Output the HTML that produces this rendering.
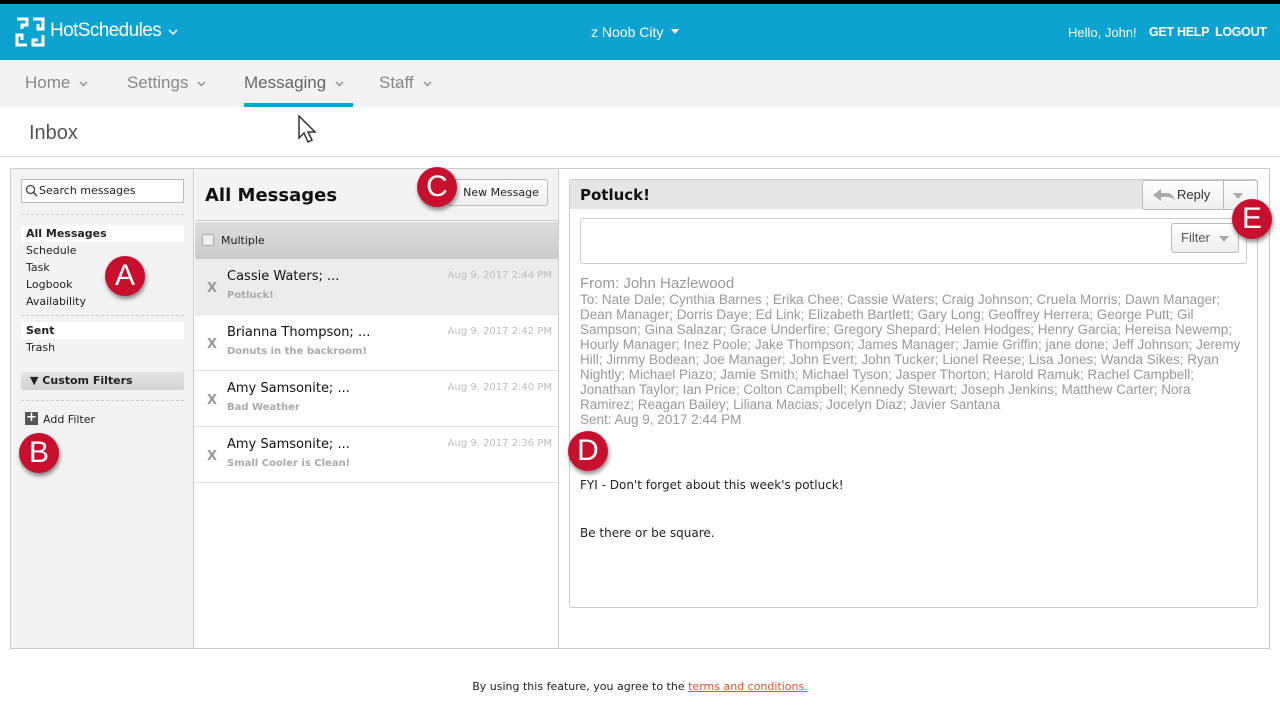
<!DOCTYPE html>
<html><head><meta charset="utf-8"><style>
*{box-sizing:border-box;margin:0;padding:0}
body{width:1280px;height:724px;background:#fff;font-family:"Liberation Sans",sans-serif;position:relative;overflow:hidden;color:#222}
.abs{position:absolute}
.top{left:0;top:0;width:1280px;height:4px;background:#000}
.hdr{left:0;top:4px;width:1280px;height:56px;background:#0ca3d0;color:#fff}
.nav{left:0;top:60px;width:1280px;height:47px;background:#f3f3f3}
.nav span{position:absolute;top:13px;font-size:17px;color:#888;white-space:nowrap}
.chev{display:inline-block;margin-left:9px;vertical-align:middle}
.badge{position:absolute;width:40px;height:40px;border-radius:50%;background:#c8102e;color:#fff;font-size:30px;text-align:center;line-height:40px;box-shadow:1px 3px 4px rgba(0,0,0,.45);font-family:"Liberation Sans",sans-serif}
.v{font-family:"DejaVu Sans",Verdana,sans-serif}
.side a{display:block;font-size:11px;color:#222;height:17px;line-height:17px;padding-left:5px}
.dash{border-top:1px dashed #ccc}
.row{position:absolute;left:195px;width:363px;height:56px;border-bottom:1px solid #e3e3e3;background:#fff}
.row .x{position:absolute;left:12px;top:22px;font-size:13px;color:#999;font-weight:bold}
.row .n{position:absolute;left:32px;top:10px;font-size:13px;color:#111}
.row .d{position:absolute;right:6px;top:11px;font-size:10px;color:#bbb}
.row .s{position:absolute;left:32px;top:31px;font-size:10px;color:#aaa;font-weight:bold}
.body{font-family:"Liberation Sans Narrow","Liberation Sans",sans-serif;color:#999;font-size:13.5px;line-height:15px;white-space:nowrap}
</style></head><body>
<div class="abs top"></div>
<div class="abs hdr">
 <svg class="abs" style="left:14px;top:12px" width="32" height="32" viewBox="0 0 32 32" fill="none" stroke="#fff" stroke-width="3"><path d="M3 3h10v6H8v4M19 3h10v10h-5V8M29 19v10H19v-5h5M13 29H3V19h5v5"/></svg>
 <div class="abs" style="left:50px;top:16px;font-size:19px;letter-spacing:-0.6px">HotSchedules</div>
 <svg class="abs" style="left:168px;top:25px" width="10" height="7" viewBox="0 0 10 7"><path d="M1 1l4 4 4-4" fill="none" stroke="#fff" stroke-width="1.5"/></svg>
 <div class="abs" style="left:591px;top:20px;font-size:14px">z Noob City</div>
 <div class="abs" style="left:671px;top:25px;width:0;height:0;border-left:4px solid transparent;border-right:4px solid transparent;border-top:5px solid #fff"></div>
 <div class="abs" style="left:1068px;top:21px;font-size:13px">Hello, John!</div>
 <div class="abs" style="left:1149px;top:21px;font-size:12.5px;font-weight:bold;letter-spacing:-0.3px">GET HELP</div>
 <div class="abs" style="left:1215px;top:21px;font-size:12.5px;font-weight:bold;letter-spacing:-0.3px">LOGOUT</div>
</div>
<div class="abs nav">
 <span style="left:25px">Home<svg class="chev" width="9" height="6" viewBox="0 0 9 6"><path d="M1 1l3.5 3.5L8 1" fill="none" stroke="#888" stroke-width="1.3"/></svg></span>
 <span style="left:127px">Settings<svg class="chev" width="9" height="6" viewBox="0 0 9 6"><path d="M1 1l3.5 3.5L8 1" fill="none" stroke="#888" stroke-width="1.3"/></svg></span>
 <span style="left:244px;color:#666">Messaging<svg class="chev" width="9" height="6" viewBox="0 0 9 6"><path d="M1 1l3.5 3.5L8 1" fill="none" stroke="#888" stroke-width="1.3"/></svg></span>
 <span style="left:379px">Staff<svg class="chev" width="9" height="6" viewBox="0 0 9 6"><path d="M1 1l3.5 3.5L8 1" fill="none" stroke="#888" stroke-width="1.3"/></svg></span>
 <div class="abs" style="left:244px;top:43px;width:109px;height:4px;background:#0ca3d0"></div>
</div>
<svg class="abs" style="left:297px;top:114px" width="22" height="30" viewBox="0 0 22 30"><path d="M2 2v22l5-5 4 9 4-2-4-8h7z" fill="#fff" stroke="#333" stroke-width="1.5"/></svg>
<div class="abs" style="left:29px;top:122px;font-size:20px;color:#555">Inbox</div>
<div class="abs" style="left:0;top:156px;width:1280px;height:1px;background:#ddd"></div>

<div class="abs" style="left:10px;top:168px;width:1260px;height:481px;border:1px solid #ccc;background:#fff"></div>
<div class="abs side v" style="left:11px;top:169px;width:183px;height:479px;background:#f3f3f3;border-right:1px solid #ccc">
 <div class="abs" style="left:10px;top:10px;width:163px;height:24px;background:#fff;border:1px solid #bbb;font-size:11px;line-height:22px;padding-left:17px">Search messages
  <svg class="abs" style="left:3px;top:4px" width="13" height="13" viewBox="0 0 13 13"><circle cx="5.5" cy="5.5" r="4" fill="none" stroke="#444" stroke-width="1.3"/><path d="M8.5 8.5l3.5 3.5" stroke="#444" stroke-width="1.5"/></svg></div>
 <div class="abs dash" style="left:10px;top:45px;width:163px"></div>
 <div class="abs" style="left:10px;top:56px;width:163px">
  <a style="background:#fff;font-weight:bold">All Messages</a><a>Schedule</a><a>Task</a><a>Logbook</a><a>Availability</a>
 </div>
 <div class="abs dash" style="left:10px;top:146px;width:163px"></div>
 <div class="abs" style="left:10px;top:153px;width:163px">
  <a style="background:#fff;font-weight:bold">Sent</a><a>Trash</a>
 </div>
 <div class="abs" style="left:10px;top:203px;width:163px;height:18px;background:linear-gradient(#e3e3e3,#d3d3d3);border-radius:2px;font-size:11px;font-weight:bold;line-height:18px;padding-left:9px">&#9660; Custom Filters</div>
 <div class="abs dash" style="left:10px;top:231px;width:163px"></div>
 <div class="abs" style="left:14px;top:243px;width:13px;height:13px;background:#555;color:#fff;font-size:13px;line-height:12px;text-align:center;font-weight:bold">+</div>
 <div class="abs" style="left:32px;top:244px;font-size:11px">Add Filter</div>
</div>
<div class="abs v" style="left:195px;top:169px;width:363px;height:52px;background:#f3f3f3;border-bottom:1px solid #ccc">
 <div class="abs" style="left:10px;top:16px;font-size:18px;font-weight:bold;color:#111">All Messages</div>
 <div class="abs" style="left:253px;top:10px;width:100px;height:27px;background:linear-gradient(#fff,#eee);border:1px solid #bbb;border-radius:3px;font-size:11px;line-height:25px;text-align:center;padding-left:6px">New Message</div>
</div>
<div class="abs v" style="left:195px;top:222px;width:363px;height:37px;background:linear-gradient(#ddd,#ccc)">
 <div class="abs" style="left:7px;top:12px;width:12px;height:12px;border:1px solid #aaa;border-radius:2px;background:#eee"></div>
 <div class="abs" style="left:26px;top:12px;font-size:11px;color:#222">Multiple</div>
</div>
<div class="v">
 <div class="row" style="top:259px;background:#ececec"><span class="x">X</span><span class="n">Cassie Waters; ...</span><span class="d">Aug 9, 2017 2:44 PM</span><span class="s">Potluck!</span></div>
 <div class="row" style="top:315px"><span class="x">X</span><span class="n">Brianna Thompson; ...</span><span class="d">Aug 9, 2017 2:42 PM</span><span class="s">Donuts in the backroom!</span></div>
 <div class="row" style="top:371px"><span class="x">X</span><span class="n">Amy Samsonite; ...</span><span class="d">Aug 9, 2017 2:40 PM</span><span class="s">Bad Weather</span></div>
 <div class="row" style="top:427px"><span class="x">X</span><span class="n">Amy Samsonite; ...</span><span class="d">Aug 9, 2017 2:36 PM</span><span class="s">Small Cooler is Clean!</span></div>
</div>
<div class="abs" style="left:558px;top:169px;width:1px;height:479px;background:#ccc"></div>
<div class="abs" style="left:569px;top:179px;width:689px;height:429px;border:1px solid #ccc;border-radius:3px;background:#fff">
 <div class="abs" style="left:0;top:0;width:687px;height:29px;background:#e5e5e5"></div>
 <div class="abs v" style="left:10px;top:6px;font-size:15px;font-weight:bold;color:#111">Potluck!</div>
 <div class="abs" style="left:572px;top:0;width:116px;height:30px;border:1px solid #bbb;border-radius:3px;background:linear-gradient(#fff,#eee)"></div>
 <div class="abs" style="left:653px;top:0;width:1px;height:30px;background:#bbb"></div>
 <svg class="abs" style="left:583px;top:8px" width="22" height="13" viewBox="0 0 22 13"><path d="M0 7l8-6v4h6c4 0 7 3 8 8-2-3-4-4-8-4H8v4z" fill="#aaa"/></svg>
 <div class="abs" style="left:607px;top:7px;font-size:13px;color:#333">Reply</div>
 <div class="abs" style="left:663px;top:13px;width:0;height:0;border-left:5px solid transparent;border-right:5px solid transparent;border-top:6px solid #aaa"></div>
 <div class="abs" style="left:10px;top:38px;width:667px;height:46px;border:1px solid #ccc;border-radius:3px"></div>
 <div class="abs" style="left:601px;top:43px;width:68px;height:30px;border:1px solid #bbb;border-radius:3px;background:linear-gradient(#fff,#eee);font-size:13px;color:#555;line-height:28px;padding-left:9px">Filter</div>
 <div class="abs" style="left:649px;top:56px;width:0;height:0;border-left:5px solid transparent;border-right:5px solid transparent;border-top:6px solid #aaa"></div>
 <div class="abs body" style="left:10px;top:96px;font-size:15px">From: John Hazlewood</div>
 <div class="abs body" style="left:10px;top:112px">To: Nate Dale; Cynthia Barnes ; Erika Chee; Cassie Waters; Craig Johnson; Cruela Morris; Dawn Manager;<br>Dean Manager; Dorris Daye; Ed Link; Elizabeth Bartlett; Gary Long; Geoffrey Herrera; George Putt; Gil<br>Sampson; Gina Salazar; Grace Underfire; Gregory Shepard; Helen Hodges; Henry Garcia; Hereisa Newemp;<br>Hourly Manager; Inez Poole; Jake Thompson; James Manager; Jamie Griffin; jane done; Jeff Johnson; Jeremy<br>Hill; Jimmy Bodean; Joe Manager; John Evert; John Tucker; Lionel Reese; Lisa Jones; Wanda Sikes; Ryan<br>Nightly; Michael Piazo; Jamie Smith; Michael Tyson; Jasper Thorton; Harold Ramuk; Rachel Campbell;<br>Jonathan Taylor; Ian Price; Colton Campbell; Kennedy Stewart; Joseph Jenkins; Matthew Carter; Nora<br>Ramirez; Reagan Bailey; Liliana Macias; Jocelyn Diaz; Javier Santana<br>Sent: Aug 9, 2017 2:44 PM</div>
 <div class="abs v" style="left:10px;top:298px;font-size:12px;color:#222">FYI - Don't forget about this week's potluck!</div>
 <div class="abs v" style="left:10px;top:346px;font-size:12px;color:#222">Be there or be square.</div>
</div>
<div class="abs v" style="left:0;top:680px;width:1280px;text-align:center;font-size:11px;color:#222">By using this feature, you agree to the <span style="color:#e0502a;text-decoration:underline">terms and conditions.</span></div>

<div class="badge" style="left:105px;top:256px">A</div>
<div class="badge" style="left:19px;top:433px">B</div>
<div class="badge" style="left:417px;top:167px">C</div>
<div class="badge" style="left:568px;top:431px">D</div>
<div class="badge" style="left:1232px;top:199px">E</div>
</body></html>
